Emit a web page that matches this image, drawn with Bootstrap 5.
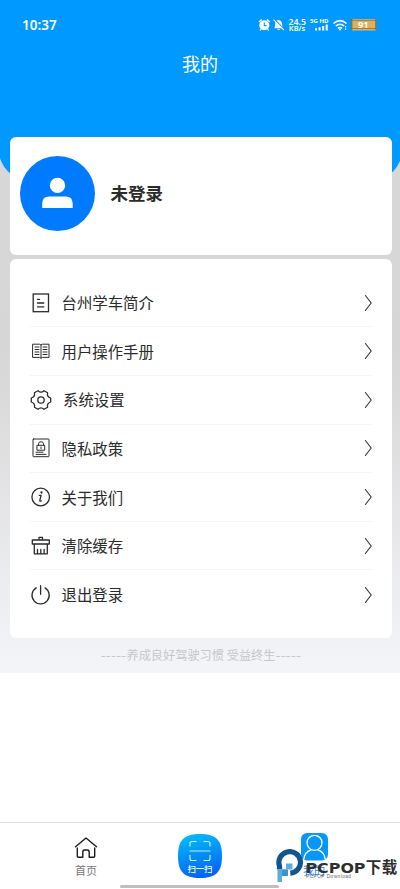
<!DOCTYPE html>
<html lang="zh-CN">
<head>
<meta charset="utf-8">
<meta name="viewport" content="width=device-width, initial-scale=1">
<title>我的</title>
<link href="https://cdn.jsdelivr.net/npm/bootstrap@5.3.0/dist/css/bootstrap.min.css" rel="stylesheet">
<style>
body{font-family:"Noto Sans","Noto Sans CJK SC",sans-serif;width:400px;height:889px;overflow:hidden;background:#fff;color:#2b2b2b}
.cjk{font-family:"Noto Sans CJK SC",sans-serif}
.page{height:672.5px;background:linear-gradient(#d8d8d8 0,#d6d6d6 52%,#f4f5f9 100%);overflow:hidden}
.hero{height:180px;margin:0 -2px 0 -1px;background:#0099ff;border-radius:0 0 30px 30px}
.status{height:49px;padding:0 25px 0 23px}
.clock{font-size:13.5px;font-weight:600;font-family:"Noto Sans",sans-serif;padding-top:1px}
.title{font-size:18px;line-height:28px;padding-right:1px}
.panel{border:0;border-radius:6px;margin:0 8.5px 0 10px}
.user{height:118px;margin-top:-43px;padding:19.4px 10px}
.avatar{width:75px;height:75px;background:#007bff}
.uname{font-size:17.5px;line-height:26px;margin-left:15.5px;margin-bottom:7px}
.menu{margin-top:4.4px;height:379px;padding:19.5px 19px 0 19.5px}
.item{height:48.6px;font-size:15.4px;line-height:22px;border-bottom:1px solid #f5f5f5}
.item:last-child{border-bottom:0}
.item .label{margin-left:10px;margin-bottom:1px}
.item .label-wide{margin-left:11.5px}
.ico{fill:none;stroke:#2b2b2b;stroke-width:1.3;stroke-linecap:round;stroke-linejoin:round}
.ico.chev{stroke-width:1.15;stroke:#333}
.fine{stroke-width:1}
.slogan{font-size:12.2px;line-height:18px;color:#c6c7ca;margin-top:8px;white-space:pre;padding-left:2px}
.dash{letter-spacing:.3px;font-size:14px;line-height:1}
.blank{height:149.5px}
.tabs{height:67px;border-top:1.5px solid #e3e3e3;padding-top:10px}
.tab{width:114px;font-size:11px;line-height:16px;color:#777}
.tab-on{color:#1686f5}
.tab-on span{padding-top:1px}
.home{margin-top:2.5px;margin-bottom:2px}
.gesture{left:120px;top:885px;width:159px;height:2.5px;background:#bfbfbf}
.wm{left:275px;top:849px}
</style>
</head>
<body>
<main class="page">
  <header class="hero text-white">
    <div class="status d-flex align-items-center justify-content-between">
      <span class="clock">10:37</span>
      <svg width="119" height="20" viewBox="258 15 119 20" fill="#fff" font-family="Noto Sans,sans-serif" font-weight="600">
        <circle cx="264.3" cy="25.3" r="5"/><path d="M259 22l2.8-2.6M269.7 22l-2.8-2.6M261 29l-1 1.5M267.6 29l1 1.5" stroke="#fff" stroke-width="1.3"/><path d="M264.3 22.4v3.2h2.2" fill="none" stroke="#09f" stroke-width="1.1"/>
        <path d="M274 28.2q1.1-1 1.1-3.8 0-3.6 3.5-4.3 3.5.7 3.5 4.3 0 2.8 1.2 3.8zM277 29h3.4q-1.7 2-3.4 0z"/><path d="M274 19l10.4 10.4" stroke="#09f" stroke-width="1.2"/><path d="M273.5 19.7l10.4 10.4" stroke="#fff" stroke-width="1.2"/>
        <text x="288.5" y="24.5" font-size="8" textLength="17.5" lengthAdjust="spacingAndGlyphs">24.5</text><text x="288.8" y="31.3" font-size="6.8" textLength="16.5" lengthAdjust="spacingAndGlyphs">KB/s</text>
        <text x="310" y="22.7" font-size="5.8" textLength="18.5" lengthAdjust="spacingAndGlyphs" font-weight="700">5G HD</text>
        <path d="M315 28.3h2v2.2h-2zM318.6 27.3h2v3.2h-2zM322.2 26h2v4.5h-2zM325.7 24.6h2v5.9h-2z"/>
        <g fill="none" stroke="#fff" stroke-width="1.6"><path d="M333.5 23.5q6.5-5.6 13 0M335.8 26q4.2-3.5 8.4 0M338 28.3q2-1.6 4 0"/></g><circle cx="340" cy="29.5" r="1.1"/><circle cx="345.6" cy="26.8" r=".8"/><circle cx="345.6" cy="29.3" r=".8"/>
        <rect x="351.3" y="19" width="25" height="11.5" rx="1" fill="#dcb05c"/><path d="M351.3 20.3h25M351.3 28.5h25" stroke="#9c7b45" stroke-width="1"/><path d="M351.8 19v11M375.9 19v11" stroke="#66604f" stroke-width="1"/>
        <text x="358" y="28.2" font-size="9.5" textLength="10.5" lengthAdjust="spacingAndGlyphs" font-weight="700">91</text>
      </svg>
    </div>
    <h1 class="title text-center fw-normal mb-0 cjk">我的</h1>
  </header>

  <section class="card panel user flex-row position-relative">
    <div class="avatar rounded-circle flex-shrink-0">
      <svg class="d-block" width="75" height="75" viewBox="0 0 75 75" fill="#fff"><circle cx="37.5" cy="29.4" r="7.7"/><path d="M22.200 52v-4.500q0-7 7-7h16.500q7 0 7 7V52z"/></svg>
    </div>
    <strong class="uname cjk align-self-center">未登录</strong>
  </section>

  <nav class="card panel menu">
    <div class="item d-flex align-items-center">
      <svg class="ico" width="22" height="22"><rect x="3.2" y="2" width="15.3" height="17.7" stroke-linejoin="miter"/><path d="M7.500 7.300h2M7.500 11h6.300M7.500 14.800h6.300"/></svg>
      <span class="label cjk">台州学车简介</span><svg class="ico chev ms-auto" width="10" height="18"><path d="M2.400 1.500L8.200 9l-5.800 7.500"/></svg>
    </div>
    <div class="item d-flex align-items-center">
      <svg class="ico fine" width="22" height="22"><path d="M3 4.200h6.500l1.500.8 1.500-.8H19v13.200h-6.500l-1.500.8-1.500-.8H3zM11 5v13M5 7h4M5 9.500h4M5 12h4M5 14.500h4M13 7h4M13 9.500h4M13 12h4M13 14.500h4"/></svg>
      <span class="label cjk">用户操作手册</span><svg class="ico chev ms-auto" width="10" height="18"><path d="M2.400 1.500L8.200 9l-5.800 7.500"/></svg>
    </div>
    <div class="item d-flex align-items-center">
      <svg class="ico" width="22" height="22"><path d="M8 1.700Q11 4.600 14 1.700L17.600 3.800Q16.600 7.700 20.700 9V13Q16.600 14.300 17.600 18.200L14 20.300Q11 17.400 8 20.300L4.400 18.200Q5.400 14.300 1.300 13V9Q5.400 7.700 4.400 3.800Z"/><circle cx="11" cy="11" r="3.2"/></svg>
      <span class="label label-wide cjk">系统设置</span><svg class="ico chev ms-auto" width="10" height="18"><path d="M2.400 1.500L8.200 9l-5.800 7.500"/></svg>
    </div>
    <div class="item d-flex align-items-center">
      <svg class="ico fine" width="22" height="22"><rect x="3" y="2" width="16" height="17.7" rx=".5"/><path d="M7.300 8.300h7.400v4.900H7.300zM8.500 8V6.800q0-2 2.500-2t2.500 2V8M11 10v1.500M6 15.200h7M6 17.400h10"/></svg>
      <span class="label cjk">隐私政策</span><svg class="ico chev ms-auto" width="10" height="18"><path d="M2.400 1.500L8.200 9l-5.800 7.500"/></svg>
    </div>
    <div class="item d-flex align-items-center">
      <svg class="ico" width="22" height="22"><circle cx="10.7" cy="11" r="8.8"/><path d="M9.300 9.300h1.800l-1.300 5q-.2 1.200 1.600.5"/><circle cx="11.5" cy="6.500" r=".5" fill="#2b2b2b"/></svg>
      <span class="label cjk">关于我们</span><svg class="ico chev ms-auto" width="10" height="18"><path d="M2.400 1.500L8.200 9l-5.800 7.500"/></svg>
    </div>
    <div class="item d-flex align-items-center">
      <svg class="ico" width="22" height="22"><path d="M9 5V2.300h3.500V5M2.300 5h17v4h-17zM4.300 9v9.800h13V9M7.500 18.500v-4M10.800 18.500v-4M14.100 18.500v-4"/></svg>
      <span class="label cjk">清除缓存</span><svg class="ico chev ms-auto" width="10" height="18"><path d="M2.400 1.500L8.200 9l-5.800 7.500"/></svg>
    </div>
    <div class="item d-flex align-items-center">
      <svg class="ico" width="22" height="22"><path d="M10.600 1.700v8.600M6.200 3.900a8.600 8.600 0 1 0 8.800 0"/></svg>
      <span class="label cjk">退出登录</span><svg class="ico chev ms-auto" width="10" height="18"><path d="M2.400 1.500L8.200 9l-5.800 7.500"/></svg>
    </div>
  </nav>
  <p class="slogan text-center mb-0 cjk"><span class="dash">-----</span>养成良好驾驶习惯 受益终生<span class="dash">-----</span></p>
</main>

<div class="blank"></div>
<footer class="tabs d-flex justify-content-center align-items-start">
  <div class="tab text-center">
    <svg class="home d-block mx-auto" width="24" height="24" viewBox="0 0 24 24" fill="none" stroke="#1c1c1c" stroke-width="1.4" stroke-linecap="round" stroke-linejoin="round"><path d="M1.500 10.800L12 2l10.500 8.800M3.300 12v8.300q0 1 1 1h4.500v-4.800q0-2.500 1.600-2.500h3.200q1.600 0 1.600 2.500v4.800h4.500q1 0 1-1V12"/></svg>
    <span class="cjk d-block">首页</span>
  </div>
  <div class="tab">
    <svg class="d-block mx-auto" width="46" height="46" viewBox="0 0 46 46"><defs><linearGradient id="scan" x1=".35" y1="0" x2=".6" y2="1"><stop stop-color="#02baf8"/><stop offset="1" stop-color="#0560f5"/></linearGradient></defs><path d="M23 1C39 1 45 7 45 23S39 45 23 45 1 39 1 23 7 1 23 1z" fill="url(#scan)"/><path d="M13 13.500v-3q0-2 2-2h4.500M26.500 8.500H31q2 0 2 2v3M13 22v3.500q0 2 2 2h4.500M26.500 27.500H31q2 0 2-2V22M12.500 18h21" fill="none" stroke="#c4efff" stroke-width="1.2"/><text x="10.500" y="38.500" font-size="8.500" font-weight="500" fill="#fff" textLength="25" font-family="Noto Sans CJK SC,sans-serif">扫一扫</text></svg>
  </div>
  <div class="tab tab-on text-center">
    <svg class="d-block mx-auto" width="27" height="28" viewBox="0 0 27 28"><rect width="27" height="27.5" rx="6" fill="#0797fb"/><g fill="none" stroke="#fff" stroke-width="1.3"><circle cx="13.5" cy="9.8" r="7.5"/><path d="M10.500 16.700Q3.500 19 2.800 26.500M16.500 16.700q7 2.300 7.700 9.800"/></g></svg>
    <span class="cjk d-block">我的</span>
  </div>
</footer>

<div class="gesture position-absolute rounded-pill"></div>
<svg class="wm position-absolute" width="125" height="36" viewBox="275 849 125 36">
  <path d="M279.500 869.500V866a10.800 10.800 0 1 1 10.800 7.200" fill="none" stroke="#11548e" stroke-width="5.2"/>
  <path d="M286 863.500h6.500v6h-6.500z" fill="#5aaede"/><path d="M277.500 869.500h8.500v5.500h-4v7h-4.500z" fill="#5aaede"/><path d="M282 869.500h6v6.500h-6z" fill="#3d94cc"/>
  <g fill="#2f2f2f" font-weight="700"><text x="305.500" y="872.800" font-family="DejaVu Sans,sans-serif" font-size="13.800" textLength="60" lengthAdjust="spacingAndGlyphs">PCPOP</text><text x="365.800" y="873" font-family="Noto Sans CJK SC,sans-serif" font-size="15.500" textLength="31.500">下载</text></g>
  <text x="306" y="878.300" font-family="Liberation Sans,sans-serif" font-size="4.800" fill="#666" textLength="45">PCPOP Download</text>
</svg>
<script src="https://cdn.jsdelivr.net/npm/bootstrap@5.3.0/dist/js/bootstrap.bundle.min.js"></script>
</body>
</html>
